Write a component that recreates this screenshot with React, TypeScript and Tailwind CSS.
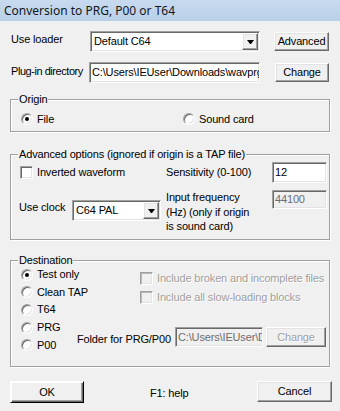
import React from 'react';

const sunken =
  'border border-[#a0a0a0] border-b-white border-r-white shadow-[inset_1px_1px_0_#696969,inset_-1px_-1px_0_#e3e3e3]';
const raised =
  'border border-white border-b-[#696969] border-r-[#696969] shadow-[inset_-1px_-1px_0_#a0a0a0,inset_1px_1px_0_#e3e3e3] bg-[#f0f0f0]';

function Button({ children, className = '', disabled = false }: { children: React.ReactNode; className?: string; disabled?: boolean }) {
  return (
    <div
      className={`${raised} flex shrink-0 items-center justify-center whitespace-nowrap leading-[13px] ${
        disabled ? 'text-[#a0a0a0] [text-shadow:1px_1px_0_#fff]' : 'text-black'
      } ${className}`}
    >
      {children}
    </div>
  );
}

function Edit({ value, className = '', disabled = false }: { value: string; className?: string; disabled?: boolean }) {
  return (
    <div
      className={`${sunken} flex shrink-0 items-center overflow-hidden whitespace-nowrap pl-[2px] ${
        disabled ? 'bg-[#f0f0f0] text-[#6d6d6d]' : 'bg-white text-black'
      } ${className}`}
    >
      {value}
    </div>
  );
}

function Combo({ value, className = '' }: { value: string; className?: string }) {
  return (
    <div className={`${sunken} flex shrink-0 bg-white p-[1px] ${className}`}>
      <div className="flex flex-1 items-center overflow-hidden whitespace-nowrap pl-[2px]">{value}</div>
      <div className={`${raised} flex w-[16px] items-center justify-center`}>
        <svg width="7" height="4" viewBox="0 0 7 4">
          <polygon points="0,0 7,0 4,4 3,4" fill="#000" />
        </svg>
      </div>
    </div>
  );
}

function Radio({ checked = false, label, className = '' }: { checked?: boolean; label: string; className?: string }) {
  return (
    <div className={`flex items-center gap-[4px] whitespace-nowrap ${className}`}>
      <span className="relative inline-block h-[12px] w-[12px] shrink-0 rounded-full border border-[#a0a0a0] border-b-white border-r-white bg-white shadow-[inset_1px_1px_0_#696969,inset_-1px_-1px_0_#e3e3e3]">
        {checked && <span className="absolute left-[3px] top-[3px] h-[4px] w-[4px] rounded-full bg-black" />}
      </span>
      <span className="leading-[13px]">{label}</span>
    </div>
  );
}

function Check({ label, disabled = false, className = '' }: { label: string; disabled?: boolean; className?: string }) {
  return (
    <div className={`flex items-center gap-[4px] whitespace-nowrap ${className}`}>
      <span
        className={`inline-block h-[13px] w-[13px] shrink-0 border border-[#a0a0a0] border-b-white border-r-white ${
          disabled
            ? 'bg-[#f0f0f0] shadow-[inset_1px_1px_0_#b8b8b8,inset_-1px_-1px_0_#e3e3e3]'
            : 'bg-white shadow-[inset_1px_1px_0_#696969,inset_-1px_-1px_0_#e3e3e3]'
        }`}
      />
      <span className={`leading-[13px] ${disabled ? 'text-[#a0a0a0] [text-shadow:1px_1px_0_#fff]' : ''}`}>{label}</span>
    </div>
  );
}

function Group({ title, className = '', children }: { title: string; className?: string; children: React.ReactNode }) {
  return (
    <div className={`relative border border-[#a0a0a0] shadow-[inset_1px_1px_0_#fff,1px_1px_0_#fff] ${className}`}>
      <span className="absolute left-[7px] top-[-7px] whitespace-nowrap bg-[#f0f0f0] px-[1px] leading-[13px]">{title}</span>
      {children}
    </div>
  );
}

export default function App() {
  return (
    <div className="h-[411px] w-[340px] overflow-hidden bg-[#f0f0f0] font-['Liberation_Sans',Arial,sans-serif] text-[11px] tracking-[-0.15px] text-black">
      <div className="flex h-[21px] items-center bg-gradient-to-b from-[#c8daee] to-[#b9d0ea] pl-[4px] font-['Noto_Sans',sans-serif] text-[12px] tracking-normal text-[#101820]">
        Conversion to PRG, P00 or T64
      </div>

      <div className="px-[10px] pt-[10px]">
        <div className="flex h-[21px] items-center">
          <span className="-mt-[4px] w-[80px] whitespace-nowrap pl-[1px] leading-[13px]">Use loader</span>
          <Combo value="Default C64" className="h-[21px] w-[170px]" />
          <Button className="ml-[14px] h-[19px] w-[55px]">Advanced</Button>
        </div>

        <div className="mt-[10px] flex h-[21px] items-center">
          <span className="-mt-[3px] w-[79px] whitespace-nowrap pl-[1px] leading-[13px] tracking-[-0.45px]">Plug-in directory</span>
          <Edit value="C:\Users\IEUser\Downloads\wavprg" className="h-[21px] w-[171px]" />
          <Button className="ml-[15px] h-[19px] w-[54px]">Change</Button>
        </div>

        <Group title="Origin" className="mt-[16px] h-[33px]">
          <div className="mt-[11px] flex h-[16px] items-center pl-[10px]">
            <Radio checked label="File" className="w-[162px]" />
            <Radio label="Sound card" />
          </div>
        </Group>

        <Group title="Advanced options (ignored if origin is a TAP file)" className="mt-[22px] h-[86px]">
          <div className="mt-[7px] flex h-[21px] items-center pl-[9px]">
            <Check label="Inverted waveform" className="w-[146px]" />
            <span className="w-[106px] whitespace-nowrap leading-[13px]">Sensitivity (0-100)</span>
            <Edit value="12" className="h-[21px] w-[55px]" />
          </div>
          <div className="mt-[7px] flex items-start pl-[9px]">
            <div className="-ml-[1px] flex w-[147px] items-start pt-[10px]">
              <span className="w-[53px] whitespace-nowrap pt-[1px] leading-[13px]">Use clock</span>
              <Combo value="C64 PAL" className="h-[21px] w-[89px]" />
            </div>
            <span className="w-[106px] whitespace-nowrap leading-[14.5px]">
              Input frequency
              <br />
              (Hz) (only if origin
              <br />
              is sound card)
            </span>
            <Edit value="44100" disabled className="h-[19px] w-[55px]" />
          </div>
        </Group>

        <Group title="Destination" className="mt-[20px] flex h-[107px]">
          <div className="w-[66px] shrink-0 pl-[10px] pt-[5px]">
            <Radio checked label="Test only" className="h-[17.6px]" />
            <Radio label="Clean TAP" className="h-[17.6px]" />
            <Radio label="T64" className="h-[17.6px]" />
            <Radio label="PRG" className="h-[17.6px]" />
            <Radio label="P00" className="h-[17.6px]" />
          </div>
          <div className="flex flex-1 flex-col pt-[8px]">
            <div className="flex flex-col gap-[1px] pl-[63px]">
              <Check disabled label="Include broken and incomplete files" className="h-[18px]" />
              <Check disabled label="Include all slow-loading blocks" className="h-[18px]" />
            </div>
            <div className="mt-[21px] flex items-center">
              <span className="mt-[5px] w-[98px] whitespace-nowrap leading-[13px]">Folder for PRG/P00</span>
              <Edit value="C:\Users\IEUser\Documents" disabled className="h-[20px] w-[88px]" />
              <Button disabled className="ml-[3px] h-[20px] w-[60px]">
                Change
              </Button>
            </div>
          </div>
        </Group>

        <div className="mt-[14px] flex items-start">
          <Button className="h-[22px] w-[74px] border-black border-b-black border-r-black shadow-[inset_1px_1px_0_#fff,inset_-1px_-1px_0_#696969,inset_-2px_-2px_0_#a0a0a0]">
            OK
          </Button>
          <span className="ml-[66px] mt-[6px] leading-[13px]">F1: help</span>
          <Button className="-mr-[2px] ml-auto h-[21px] w-[75px]">Cancel</Button>
        </div>
      </div>
    </div>
  );
}
